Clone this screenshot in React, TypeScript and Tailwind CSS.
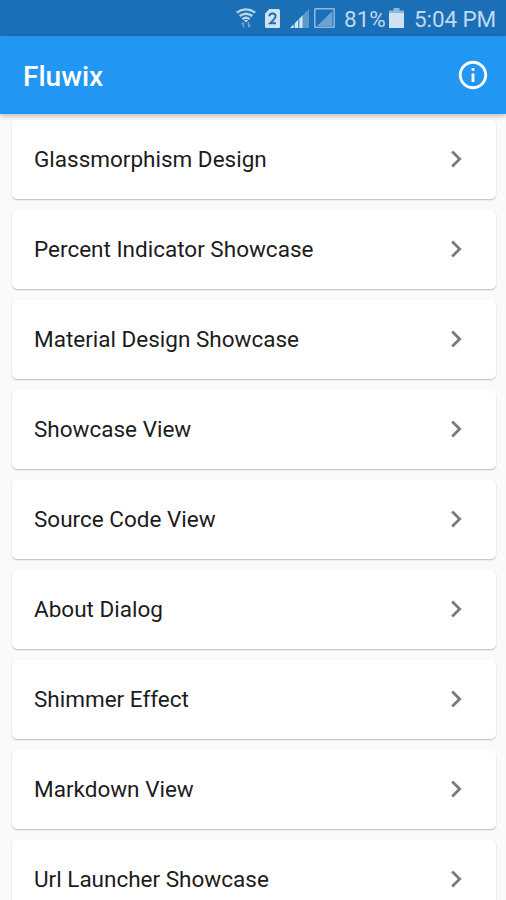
import { MdChevronRight, MdInfoOutline } from 'react-icons/md'

const items = [
  'Glassmorphism Design',
  'Percent Indicator Showcase',
  'Material Design Showcase',
  'Showcase View',
  'Source Code View',
  'About Dialog',
  'Shimmer Effect',
  'Markdown View',
  'Url Launcher Showcase',
]

function WifiIcon() {
  return (
    <svg width="20" height="20" viewBox="0 0 20 20" fill="none" stroke="#b9d5ec" strokeWidth="2.3">
      <path d="M0.8 4.6Q10 -1.8 19.2 4.6" />
      <path d="M3.6 8Q10 3.4 16.4 8" />
      <path d="M6.3 11.2Q10 8.2 13.7 11.2" />
      <path d="M7.8 12L10 14.5L12.2 12Z" fill="#c5dcef" stroke="none" />
      <path d="M7.5 19.5V14.5M5.7 16.5L7.5 14.5M12.5 14V19M14.3 17L12.5 19.2" stroke="#6fa7d4" strokeWidth="1.5" />
    </svg>
  )
}

function SimIcon() {
  return (
    <svg width="15" height="19" viewBox="0 0 15 19">
      <path d="M4.5 0H13.5Q15 0 15 1.5V17.5Q15 19 13.5 19H1.5Q0 19 0 17.5V4.5Z" fill="#cfe2f2" />
      <path d="M4.3 7.2Q4.5 4.5 7.5 4.5Q10.6 4.5 10.6 7.1Q10.6 8.7 8.5 10.8L5 14.3H11" fill="none" stroke="#1b6fb7" strokeWidth="1.9" />
    </svg>
  )
}

function SignalIcon() {
  return (
    <svg width="19" height="19" viewBox="0 0 19 19">
      <path d="M19 0V19H0Z" fill="#5a9acf" />
      <path d="M1 18L3.5 15.5V19H1ZM5 14L8 11V19H5ZM9.5 9.5L12.5 6.5V19H9.5Z" fill="#d5e6f4" />
    </svg>
  )
}

function EmptySignalIcon() {
  return (
    <svg width="21" height="20" viewBox="0 0 21 20">
      <path d="M18.5 3V18H3Z" fill="#6aa4d5" />
      <rect x="0.8" y="0.8" width="19.4" height="18.4" rx="0.5" fill="none" stroke="#8ebae0" strokeWidth="1.5" />
    </svg>
  )
}

function BatteryIcon() {
  return (
    <svg width="15" height="20" viewBox="0 0 15 20">
      <path d="M4.5 0H10.5V2.5H15V20H0V2.5H4.5Z" fill="#8ab7dd" />
      <path d="M0 5H15V20H0Z" fill="#cfe2f2" />
    </svg>
  )
}

function StatusBar() {
  return (
    <div className="flex h-9 items-center bg-[#1a6fb7] pl-[236px] text-[22.5px] leading-none text-[#c0d9ee]">
      <WifiIcon />
      <div className="ml-[9px]"><SimIcon /></div>
      <div className="ml-2.5"><SignalIcon /></div>
      <div className="ml-[5px]"><EmptySignalIcon /></div>
      <span className="ml-[9px] w-[42px] whitespace-nowrap pt-0.5">81%</span>
      <div className="ml-[3px]"><BatteryIcon /></div>
      <span className="ml-2.5 whitespace-nowrap pt-0.5 tracking-[-0.1px]">5:04 PM</span>
    </div>
  )
}

function Header() {
  return (
    <header className="relative z-10 flex h-[78px] items-center justify-between bg-[#2196f3] pr-4 pl-[23px] text-white shadow-[0_2px_5px_rgba(0,0,0,0.26)]">
      <h1 className="pt-[3px] text-[28px] font-medium">Fluwix</h1>
      <MdInfoOutline className="size-[34px]" />
    </header>
  )
}

export default function App() {
  return (
    <div className="h-[900px] w-[506px] overflow-hidden bg-[#fafafa] font-['Roboto',sans-serif]">
      <StatusBar />
      <Header />
      <ul className="flex flex-col gap-[11px] pt-1.5 pr-2.5 pl-[11.5px]">
        {items.map((item) => (
          <li
            key={item}
            className="flex h-[79px] shrink-0 items-center justify-between rounded-[5px] bg-white pr-[23px] pl-[22.5px] shadow-[0_1px_1.5px_rgba(0,0,0,0.25)]"
          >
            <span className="text-[22.5px] text-[#1c1c1c]">{item}</span>
            <MdChevronRight className="mb-px size-[34px] text-[#7b7b7b]" />
          </li>
        ))}
      </ul>
    </div>
  )
}
